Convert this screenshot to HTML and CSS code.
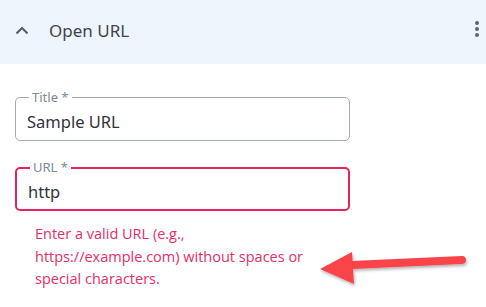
FILE: index.html
```html
<!DOCTYPE html>
<html lang="en">
<head>
    <meta charset="UTF-8">
    <title>Open URL</title>
    <link rel="stylesheet" href="styles.css">
</head>
<body>
    <div class="panel-header">
        <svg class="chevron" width="14" height="9" viewBox="0 0 14 9">
            <path d="M1.5 7.5 L7 2 L12.5 7.5" fill="none" stroke="#555d66" stroke-width="2"/>
        </svg>
        <span class="panel-title">Open URL</span>
        <span class="kebab"><i></i><i></i><i></i></span>
    </div>

    <div class="form-body">
        <fieldset class="field">
            <legend>Title *</legend>
            <div class="field-value">Sample URL</div>
        </fieldset>

        <fieldset class="field field-error">
            <legend>URL *</legend>
            <div class="field-value">http</div>
        </fieldset>

        <div class="error-text">Enter a valid URL (e.g.,<br>https://example.com) without spaces or<br>special characters.</div>
    </div>

    <svg class="arrow" width="170" height="50" viewBox="0 0 170 50">
        <defs>
            <filter id="shadow" x="-10%" y="-30%" width="120%" height="160%">
                <feDropShadow dx="1" dy="2" stdDeviation="1.5" flood-color="#000" flood-opacity="0.3"/>
            </filter>
        </defs>
        <g filter="url(#shadow)">
            <path d="M150 16 L40 21" stroke="#f94449" stroke-width="8" stroke-linecap="round"/>
            <path d="M8 25 L40 8 L42 40 Z" fill="#f94449"/>
        </g>
    </svg>
</body>
</html>
```

FILE: styles.css
```css
body {
    margin: 0;
    font-family: 'Open Sans', 'Noto Sans', sans-serif;
    background-color: #ffffff;
    position: relative;
    width: 486px;
    height: 307px;
    overflow: hidden;
}

.panel-header {
    display: flex;
    align-items: center;
    height: 64px;
    padding: 0 0 0 15px;
    background-color: #eef5fd;
}

.chevron {
    display: block;
    margin-top: -4px;
}

.panel-title {
    margin-left: 20px;
    margin-top: -4px;
    font-family: 'Noto Sans', sans-serif;
    font-size: 17px;
    color: #3f454d;
}

.kebab {
    display: flex;
    flex-direction: column;
    gap: 2px;
    margin-left: auto;
    margin-right: 7px;
    margin-top: -6px;
}

.kebab i {
    display: block;
    width: 4px;
    height: 4px;
    border-radius: 50%;
    background-color: #5b6570;
}

.form-body {
    display: flex;
    flex-direction: column;
    padding: 27px 0 0 15px;
    width: 335px;
}

.field {
    margin: 0 0 20px 0;
    padding: 7px 11px 0 11px;
    height: 50px;
    box-sizing: border-box;
    border: 1.5px solid #a3abb5;
    border-radius: 5px;
    min-width: 0;
}

.field legend {
    padding: 0 3px;
    margin-left: 2px;
    font-family: 'Noto Sans', sans-serif;
    font-size: 13px;
    line-height: 13px;
    color: #7d8896;
}

.field-value {
    font-family: 'Noto Sans', sans-serif;
    font-size: 16.5px;
    line-height: 22px;
    color: #2f343a;
}

.field-error {
    border: 2px solid #e5245b;
    margin-bottom: 12px;
}

.error-text {
    padding-left: 20px;
    font-size: 14.5px;
    line-height: 22.5px;
    color: #e62e68;
}

.arrow {
    position: absolute;
    left: 312px;
    top: 244px;
}
```
